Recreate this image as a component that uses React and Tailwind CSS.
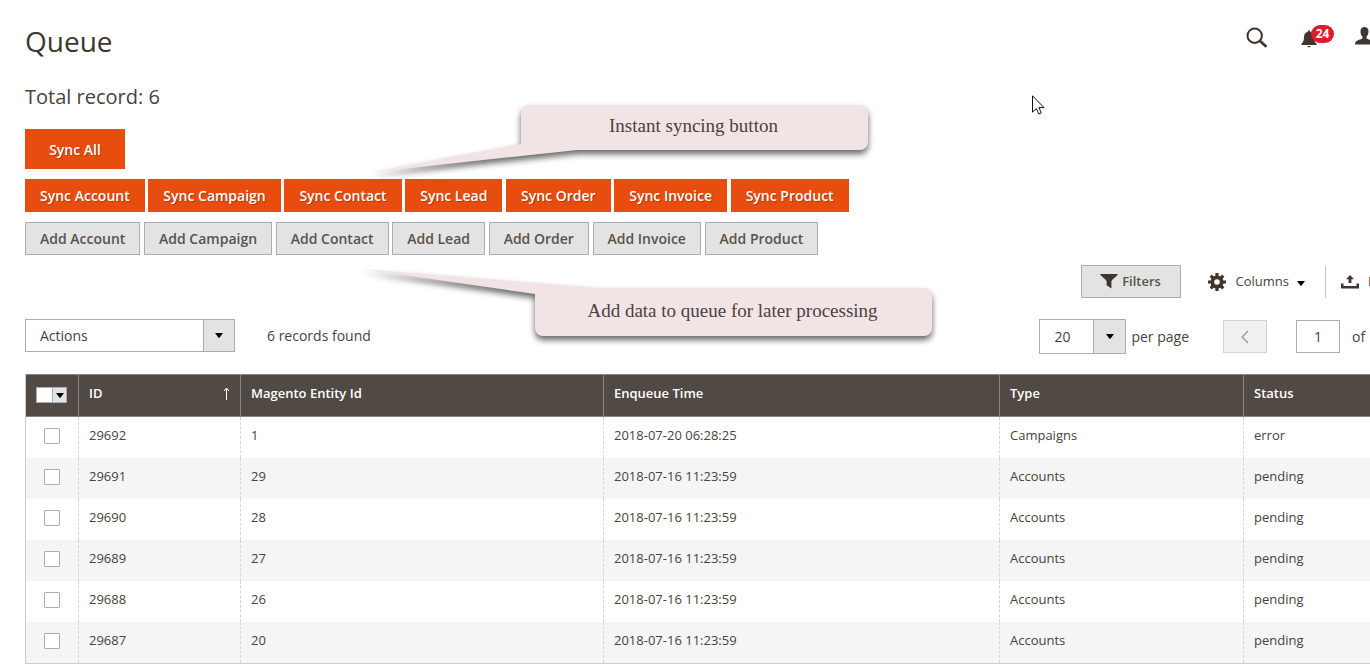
import React from "react";

const entities = ["Account", "Campaign", "Contact", "Lead", "Order", "Invoice", "Product"];

const rows = [
  { id: "29692", entity: "1", time: "2018-07-20 06:28:25", type: "Campaigns", status: "error" },
  { id: "29691", entity: "29", time: "2018-07-16 11:23:59", type: "Accounts", status: "pending" },
  { id: "29690", entity: "28", time: "2018-07-16 11:23:59", type: "Accounts", status: "pending" },
  { id: "29689", entity: "27", time: "2018-07-16 11:23:59", type: "Accounts", status: "pending" },
  { id: "29688", entity: "26", time: "2018-07-16 11:23:59", type: "Accounts", status: "pending" },
  { id: "29687", entity: "20", time: "2018-07-16 11:23:59", type: "Accounts", status: "pending" },
];

function Caret({ className = "" }) {
  return (
    <svg className={className} width="8" height="5" viewBox="0 0 8 5" aria-hidden="true">
      <path d="M0 0h8L4.6 4.6a.8.8 0 0 1-1.2 0z" fill="#000" />
    </svg>
  );
}

function SearchIcon() {
  return (
    <svg width="22" height="22" viewBox="0 0 22 22" fill="none" stroke="#41362f" aria-hidden="true">
      <circle cx="8.7" cy="8.7" r="7.2" strokeWidth="2" />
      <path d="M14 14l6.4 5.8" strokeWidth="2.8" />
    </svg>
  );
}

function BellIcon() {
  return (
    <svg width="16" height="18" viewBox="0 0 16 18" fill="#41362f" aria-hidden="true">
      <path d="M8 .4c.8 0 1.2.5 1.2 1.3C11.600 2.300 13 4.300 13 7c0 3.300.7 5.200 2.600 6.800V15H.4v-1.200C2.300 12.200 3 10.300 3 7c0-2.700 1.400-4.700 3.800-5.300C6.800.9 7.200.4 8 .4z" />
      <path d="M6.200 16h3.600c-.2.900-.9 1.300-1.800 1.300S6.400 16.900 6.200 16z" />
    </svg>
  );
}

function UserIcon() {
  return (
    <svg className="shrink-0" width="19" height="18" viewBox="0 0 19 18" fill="#41362f" aria-hidden="true">
      <path d="M9.500 0c2.500 0 4 1.700 4 4.300 0 2.200-.8 4.400-2 5.500v1.400c0 .8 5.100 1.700 6.500 3.200.7.800 1 1.800 1 3.100H0c0-1.300.3-2.300 1-3.100 1.400-1.500 6.500-2.400 6.500-3.200V9.800c-1.200-1.100-2-3.300-2-5.500C5.500 1.700 7 0 9.500 0z" />
    </svg>
  );
}

function FunnelIcon() {
  return (
    <svg width="18" height="15" viewBox="0 0 18 15" fill="#41362f" aria-hidden="true">
      <path d="M0 .3C0 0 .4 0 .6 0h16.800c.4 0 .6.200.4.600C17.200 2 12 5.500 11.400 7.200V14.500L6.600 11.200V7.200C6 5.500.8 2 0 .3z" />
    </svg>
  );
}

function GearIcon() {
  return (
    <svg width="18" height="18" viewBox="0 0 18 18" fill="none" aria-hidden="true">
      <circle cx="9" cy="9" r="4.700" stroke="#41362f" strokeWidth="3.800" />
      <g stroke="#41362f" strokeWidth="3.200">
        <path d="M9 0v3.500M9 14.500V18M0 9h3.500M14.500 9H18M2.700 2.700l2.400 2.400M12.900 12.900l2.400 2.400M2.700 15.300l2.400-2.400M12.900 5.100l2.400-2.400" />
      </g>
    </svg>
  );
}

function ExportIcon() {
  return (
    <svg className="shrink-0" width="18" height="14" viewBox="0 0 18 14" fill="#41362f" aria-hidden="true">
      <path d="M0 8.500h2.500v2.500h13V8.500H18V13.500H0z" />
      <path d="M9 0l4 4.300h-2.600V8H7.600V4.300H5z" />
    </svg>
  );
}

function SelectBox({ label, options, box, arrow }) {
  return (
    <div className={"relative border border-[#adadad] bg-white " + box}>
      <select aria-label={label} className="block h-full w-full appearance-none bg-transparent pl-[14px] text-sm outline-none">
        {options.map((o) => <option key={o}>{o}</option>)}
      </select>
      <span className={"pointer-events-none absolute inset-y-0 right-0 flex items-center justify-center border-l border-[#adadad] bg-[#e3e3e3] " + arrow}>
        <Caret />
      </span>
    </div>
  );
}

export default function App() {
  const cell = "border-r border-dashed border-r-[#d6d6d6] px-[10px] pb-[5px] last:border-r-0";
  const head = "border-y border-r border-[#8a837f] px-[10px] pb-[5px] text-left font-semibold last:border-r-0";
  return (
    <div className="relative min-h-screen overflow-x-hidden bg-white pl-[25px] font-['Open_Sans',sans-serif] text-sm text-[#4a423d]">
      <header className="flex items-start justify-between pt-[21px] text-[#41362f]">
        <h1 className="text-[28px] leading-10">Queue</h1>
        <div className="flex items-start pt-[6px]">
          <button type="button" aria-label="Search" className="mr-[33px]"><SearchIcon /></button>
          <button type="button" aria-label="Notifications" className="relative mr-[38px] pt-[3px]">
            <BellIcon />
            <span className="absolute -top-[2px] left-[10px] flex h-[18px] w-[23px] items-center justify-center rounded-full bg-[#df1b2b] text-xs font-bold text-white">24</span>
          </button>
          <button type="button" aria-label="Account" className="flex w-[15px] overflow-hidden"><UserIcon /></button>
        </div>
      </header>

      <main>
        <p className="mt-[22px] text-xl leading-7">Total record: 6</p>

        <button type="button" className="mt-[18px] block h-10 w-[100px] bg-[#e84d0f] pt-[2px] font-semibold text-white text-shadow-[1px_1px_0_rgba(0,0,0,0.25)]">
          Sync All
        </button>
        <div className="mt-[10px] h-[33px] whitespace-nowrap">
          {entities.map((e) => (
            <React.Fragment key={e}>
              <button type="button" className="h-[33px] bg-[#e84d0f] px-[15px] align-top font-semibold text-white text-shadow-[1px_1px_0_rgba(0,0,0,0.25)]">
                Sync {e}
              </button>{" "}
            </React.Fragment>
          ))}
        </div>
        <div className="mt-[10px] h-[33px] whitespace-nowrap">
          {entities.map((e) => (
            <React.Fragment key={e}>
              <button type="button" className="h-[33px] border border-[#adadad] bg-[#e3e3e3] px-[14px] align-top font-semibold text-[#5a524c]">
                Add {e}
              </button>{" "}
            </React.Fragment>
          ))}
        </div>

        <div className="mt-[10px] flex h-[33px] items-center justify-end">
          <button type="button" className="flex h-[33px] w-[100px] items-center justify-center gap-1 border border-[#adadad] bg-[#e3e3e3] text-[13px] font-semibold text-[#5a524c]">
            <FunnelIcon />Filters
          </button>
          <button type="button" className="ml-[27px] flex items-center text-[13px]">
            <GearIcon /><span className="ml-[10px]">Columns</span><Caret className="mt-1 ml-2" />
          </button>
          <span className="ml-5 h-8 w-px bg-[#c4c4c4]" />
          <button type="button" className="ml-[15px] flex w-[29px] items-center gap-[9px] text-[13px] whitespace-nowrap">
            <ExportIcon />Export
          </button>
        </div>

        <div className="mt-[21px] flex h-[35px] items-start">
          <SelectBox label="Actions" options={["Actions"]} box="h-[33px] w-[210px]" arrow="w-[31px]" />
          <span className="ml-8 leading-[34px]">6 records found</span>
          <div className="ml-auto flex items-start">
            <SelectBox label="Rows per page" options={["20"]} box="h-[35px] w-[87px]" arrow="w-8" />
            <span className="ml-[5px] leading-[35px]">per page</span>
            <button type="button" aria-label="Previous page" disabled className="mt-px ml-[34px] flex h-[33px] w-11 items-center justify-center border border-[#d2d2d2] bg-[#f0f0f0]">
              <svg width="8" height="14" viewBox="0 0 8 14" fill="none" stroke="#a09b98" strokeWidth="1.400" aria-hidden="true"><path d="M7 1L1.200 7 7 13" /></svg>
            </button>
            <input aria-label="Current page" defaultValue="1" className="mt-px ml-[29px] h-[33px] w-11 border border-[#adadad] bg-white text-center outline-none" />
            <span className="ml-3 w-[18px] leading-[35px] whitespace-nowrap">of 1</span>
          </div>
        </div>

        <table className="mt-5 w-full table-fixed border-separate border-spacing-0 border-b border-l border-[#cccccc] text-[13px]">
          <colgroup>
            <col className="w-[53px]" />
            <col className="w-[162px]" />
            <col className="w-[363px]" />
            <col className="w-[396px]" />
            <col className="w-[244px]" />
            <col />
          </colgroup>
          <thead>
            <tr className="h-[43px] bg-[#514943] text-white">
              <th className="border-y border-r border-[#8a837f] pb-[2px] pl-[10px]">
                <div className="flex h-4 w-[31px] border border-[#adadad]">
                  <input type="checkbox" aria-label="Select all" className="h-full w-[15px] appearance-none bg-white" />
                  <button type="button" aria-label="Selection options" className="flex flex-1 items-center justify-center border-l border-[#adadad] bg-[#e3e3e3]"><Caret className="mt-px" /></button>
                </div>
              </th>
              <th className={head}>
                <div className="flex items-center justify-between">
                  ID
                  <svg width="7" height="13" viewBox="0 0 7 13" fill="none" stroke="#fff" aria-hidden="true"><path d="M3.500 13V1M1 4l2.500-3L6 4" /></svg>
                </div>
              </th>
              <th className={head}>Magento Entity Id</th>
              <th className={head}>Enqueue Time</th>
              <th className={head}>Type</th>
              <th className={head}>Status</th>
            </tr>
          </thead>
          <tbody>
            {rows.map((r) => (
              <tr key={r.id} className="h-[41px] even:bg-[#f5f5f5]">
                <td className="border-r border-dashed border-r-[#d6d6d6] pb-[3px]">
                  <input type="checkbox" aria-label={"Select " + r.id} className="mx-auto block size-4 appearance-none rounded-[1px] border border-[#adadad] bg-white" />
                </td>
                <td className={cell}>{r.id}</td>
                <td className={cell}>{r.entity}</td>
                <td className={cell}>{r.time}</td>
                <td className={cell}>{r.type}</td>
                <td className={cell}>{r.status}</td>
              </tr>
            ))}
          </tbody>
        </table>
      </main>

      <div className="pointer-events-none absolute top-[95px] left-[360px] h-[80px] w-[520px]">
        <svg className="absolute inset-0 overflow-visible drop-shadow-[0_4px_3px_rgba(0,0,0,0.6)]" width="520" height="80" viewBox="0 0 520 80" aria-hidden="true">
          <path d="M168 10H500a8 8 0 0 1 8 8V47a8 8 0 0 1-8 8H217L12 77 161 49V18a8 8 0 0 1 7-8z" fill="#f2e4e4" />
        </svg>
        <p className="relative ml-[147px] pt-[19px] text-center font-['Liberation_Serif',serif] text-[19px] leading-6 text-[#4a4143]">Instant syncing button</p>
      </div>
      <div className="pointer-events-none absolute top-[260px] left-[360px] h-[85px] w-[580px]">
        <svg className="absolute inset-0 overflow-visible drop-shadow-[0_4px_3px_rgba(0,0,0,0.6)]" width="580" height="85" viewBox="0 0 580 85" aria-hidden="true">
          <path d="M238 28H564a8 8 0 0 1 8 8V68a8 8 0 0 1-8 8H183a8 8 0 0 1-8-8V34L2 9z" fill="#f2e4e4" />
        </svg>
        <p className="relative ml-[165px] pt-[39px] text-center font-['Liberation_Serif',serif] text-[19px] leading-6 text-[#4a4143]">Add data to queue for later processing</p>
      </div>
      <svg className="pointer-events-none absolute top-[95px] left-[1032px]" width="13" height="20" viewBox="0 0 13 20" aria-hidden="true">
        <path d="M.5.800V17.200L4.300 13.600 6.800 19 9.300 17.900 6.900 12.600H12z" fill="#fff" stroke="#111" />
      </svg>
    </div>
  );
}
